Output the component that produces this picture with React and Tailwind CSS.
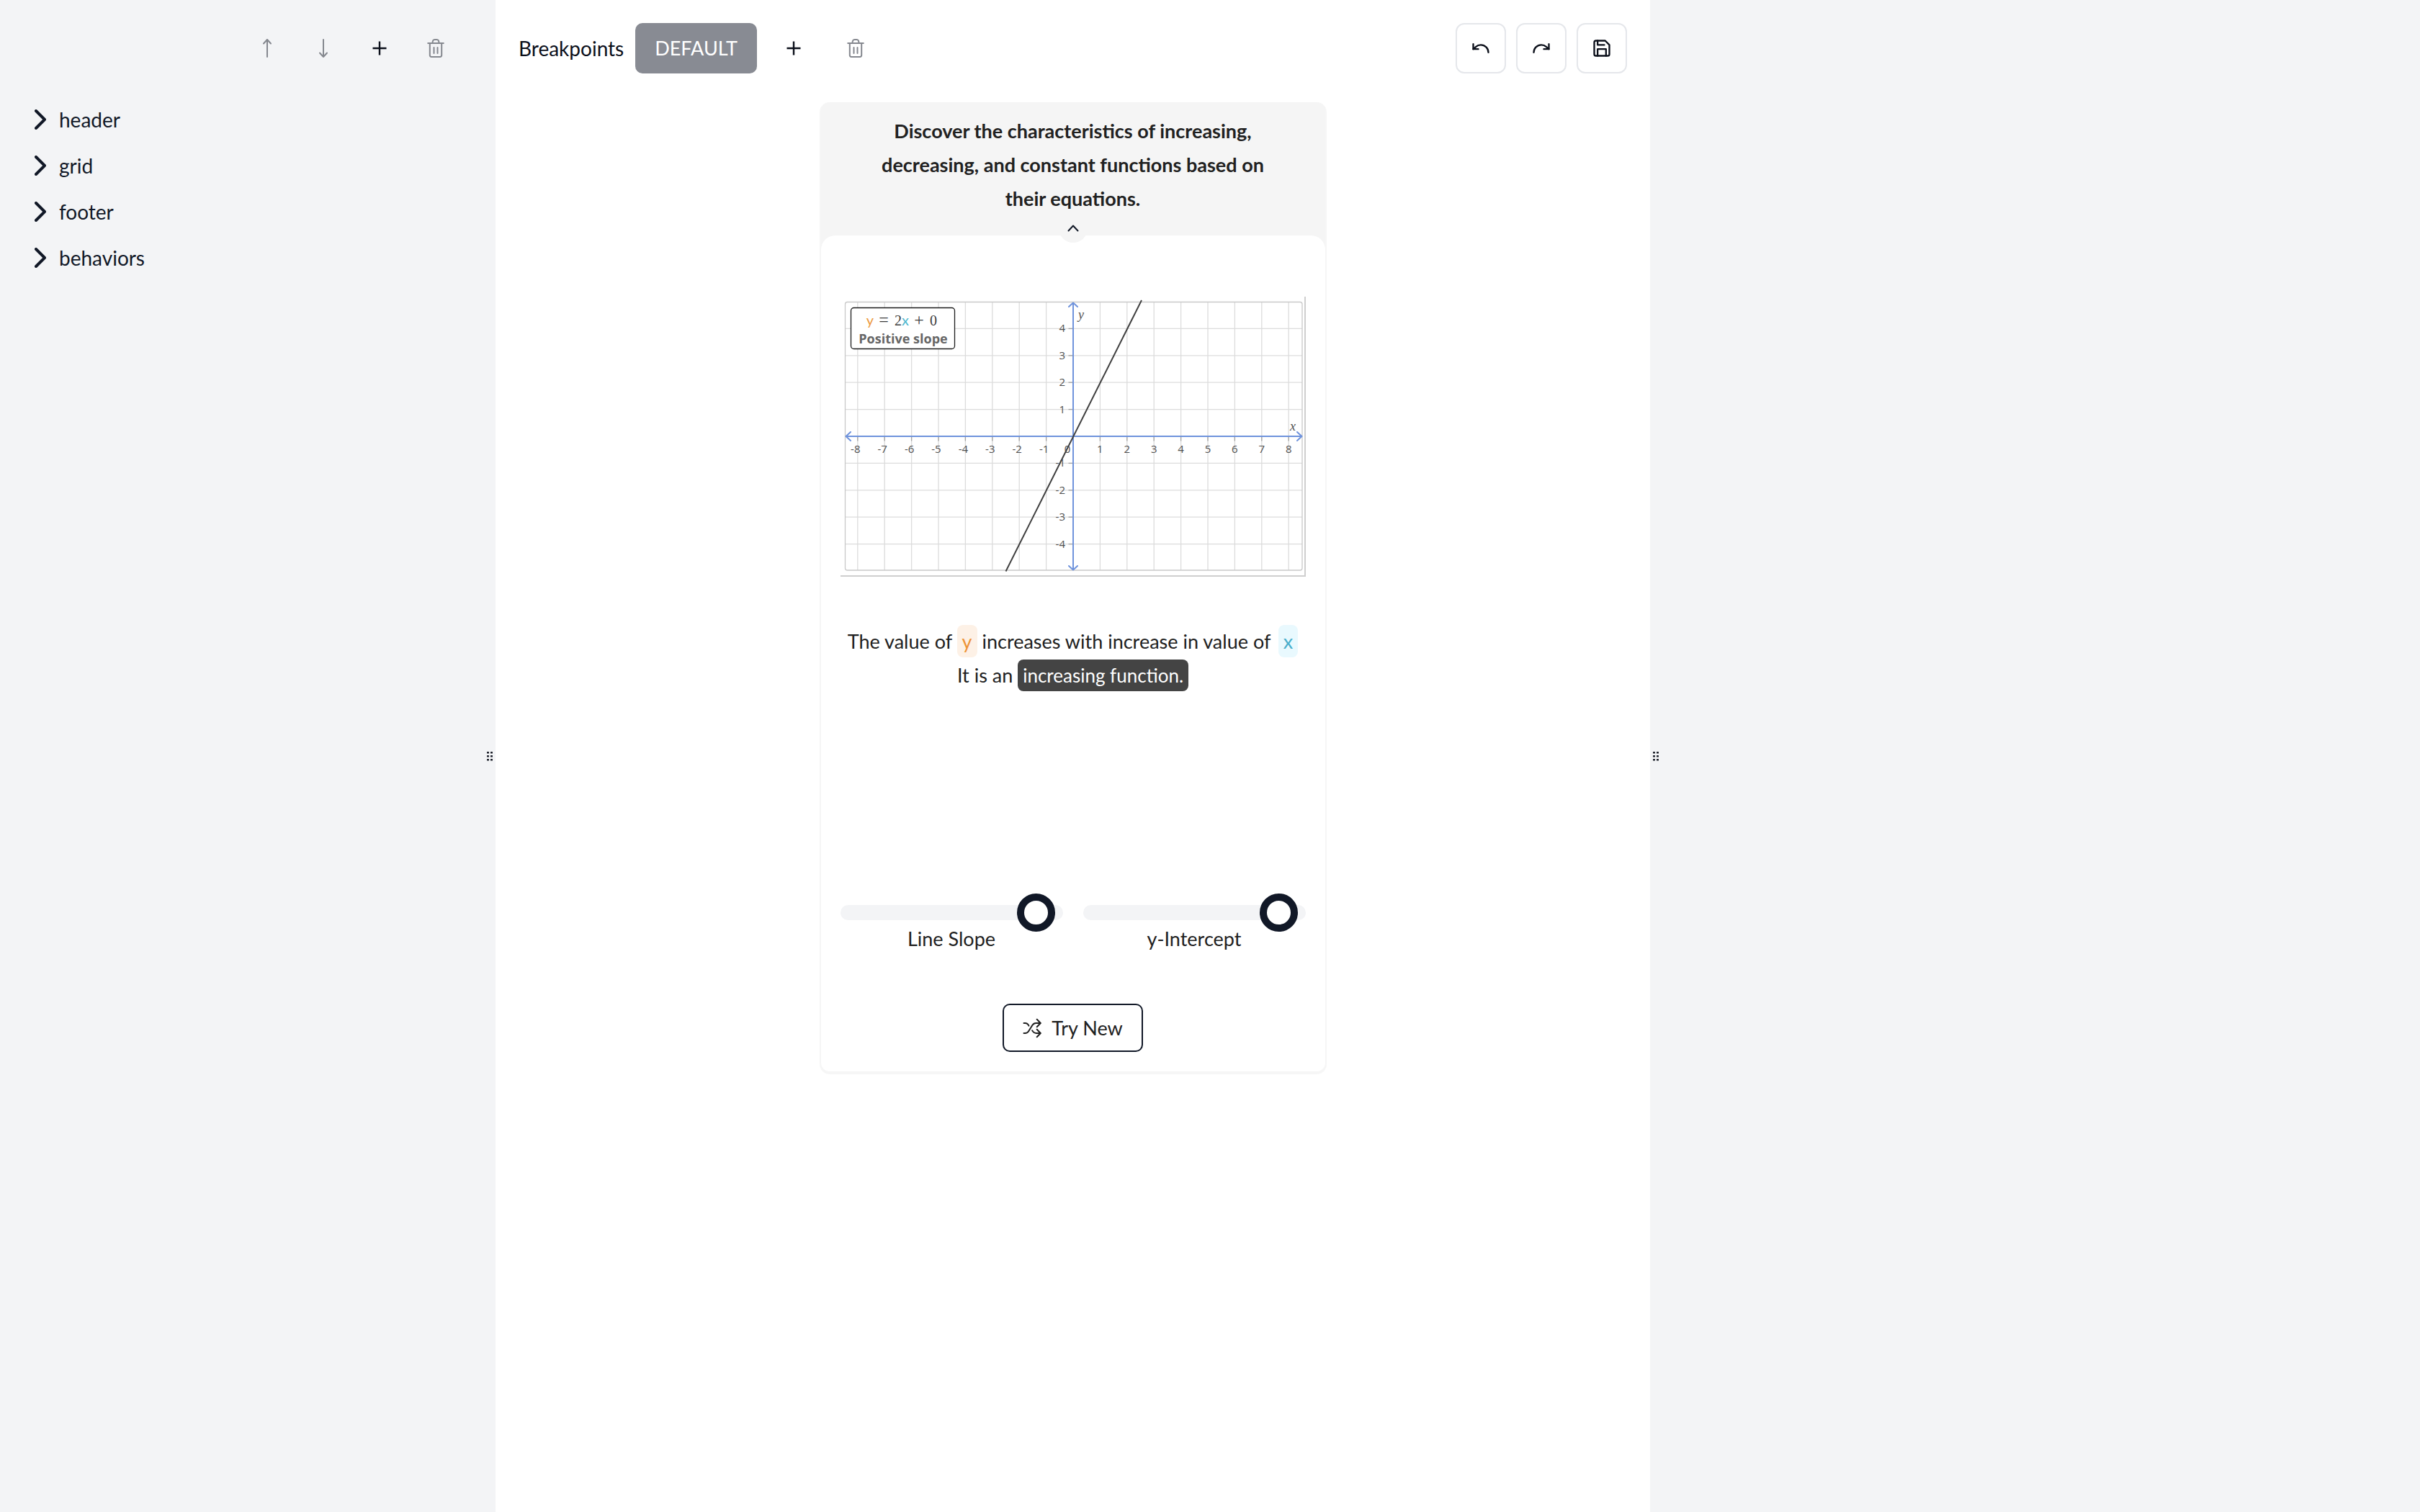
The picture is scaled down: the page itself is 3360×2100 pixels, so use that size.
import React, { useState } from "react";
import { Undo, Redo } from "lucide-react";

const sections = ["header", "grid", "footer", "behaviors"];

function ArrowUpIcon() {
  return (
    <svg viewBox="0 0 28 28" className="size-7" fill="none" stroke="currentColor" strokeWidth="2" strokeLinecap="round" strokeLinejoin="round">
      <path d="M14 26V2M9 7.5 14 2l5 5.5" />
    </svg>
  );
}

function ArrowDownIcon() {
  return (
    <svg viewBox="0 0 28 28" className="size-7" fill="none" stroke="currentColor" strokeWidth="2" strokeLinecap="round" strokeLinejoin="round">
      <path d="M14 2v24M9 20.5 14 26l5-5.5" />
    </svg>
  );
}

function PlusIcon() {
  return (
    <svg viewBox="0 0 28 28" className="size-7" fill="none" stroke="currentColor" strokeWidth="2.4">
      <path d="M14 4.5v19M4.5 14h19" />
    </svg>
  );
}

function TrashIcon() {
  return (
    <svg viewBox="0 0 28 28" className="size-7" fill="none" stroke="currentColor" strokeWidth="2" strokeLinecap="round" strokeLinejoin="round">
      <path d="M3.2 7h21.6M5.8 7v16.5A2.3 2.3 0 0 0 8 26h12a2.3 2.3 0 0 0 2.2-2.5V7M9.5 7c0-3.5 1-5 3-5h3c2 0 3 1.5 3 5M11.5 13v8M16.5 13v8" />
    </svg>
  );
}

function SaveIcon() {
  return (
    <svg viewBox="0 0 24 24" className="size-7" fill="none" stroke="currentColor" strokeWidth="2" strokeLinecap="round" strokeLinejoin="round">
      <path d="M19 21H5a2 2 0 0 1-2-2V5a2 2 0 0 1 2-2h11l5 5v11a2 2 0 0 1-2 2z" />
      <path d="M17 21v-8H7v8M7 3v5h8" />
    </svg>
  );
}

function ShuffleIcon() {
  return (
    <svg viewBox="0 0 26 28" className="h-7 w-[26px]" fill="none" stroke="currentColor" strokeWidth="2" strokeLinecap="round" strokeLinejoin="round">
      <path d="M1.5 21h1.8c2.3 0 3.8-1 5-3l5-8c1.300-2 2.700-3 5-3h6.200" />
      <path d="M1.500 7h2c1.800 0 3.200.8 4.300 2.600l.6 1" />
      <path d="M13.200 17.200l.8 1.300c1.200 1.700 2.600 2.500 4.500 2.500h6" />
      <path d="M19.700 1.700l5 5.300-5 5.300M19.700 15.700l5 5.300-5 5.300" />
    </svg>
  );
}

function Grip() {
  return (
    <svg viewBox="0 0 8 13" className="h-[13px] w-2" fill="#1b1f29">
      {[0, 5, 10].map((y) => (
        <React.Fragment key={y}>
          <rect x="0" y={y} width="3" height="2.5" rx="0.6" />
          <rect x="5" y={y} width="3" height="2.5" rx="0.6" />
        </React.Fragment>
      ))}
    </svg>
  );
}

function IconButton({ label, disabled, children }) {
  return (
    <button type="button" aria-label={label} disabled={disabled} className="flex size-[70px] items-center justify-center text-[#0b0f1a] disabled:text-[#85888f]">
      {children}
    </button>
  );
}

function OutlineButton({ label, children }) {
  return (
    <button type="button" aria-label={label} className="flex size-[70px] items-center justify-center rounded-xl border-2 border-[#e5e7eb] bg-white text-[#0b0f1a]">
      {children}
    </button>
  );
}

const U = 37.4;
const OX = 323;
const OY = 194;
const range = (n) => Array.from({ length: n * 2 + 1 }, (_, i) => i - n);

function Graph() {
  return (
    <svg viewBox="0 0 644 387" className="block w-full" fontFamily="'Open Sans', sans-serif" fontSize="15" fill="#505050">
      <g stroke="#dcdcdc" strokeWidth="1.3">
        {range(8).map((n) => (
          <path key={n} d={`M${OX + n * U} 7V380`} />
        ))}
        {range(4).map((n) => (
          <path key={n} d={`M6 ${OY + n * U}H641`} />
        ))}
      </g>
      <rect x="6.5" y="7.5" width="634.5" height="372.5" rx="3" fill="none" stroke="#c9c9c9" strokeWidth="1.3" />
      <g stroke="#a3a3a3" strokeWidth="1.3">
        {range(8).map((n) => (
          <path key={n} d={`M${OX + n * U} ${OY}v6.5`} />
        ))}
        {range(4).map((n) => (
          <path key={n} d={`M${OX} ${OY + n * U}h-6.5`} />
        ))}
      </g>
      {range(8).filter((n) => n !== 0).map((n) => (
        <text key={n} x={OX + n * U - (n < 0 ? 3 : 0)} y={OY + 23} textAnchor="middle">{n}</text>
      ))}
      {range(4).filter((n) => n !== 0).map((n) => (
        <text key={n} x={OX - 11} y={OY - n * U + 5} textAnchor="end">{n}</text>
      ))}
      <text x={OX - 8} y={OY + 23} textAnchor="middle">0</text>
      <g fontFamily="'Liberation Serif', serif" fontStyle="italic" fontSize="18">
        <text x={OX + 7} y={31}>y</text>
        <text x={624} y={OY - 8}>x</text>
      </g>
      <g stroke="#6f93dc" strokeWidth="2" fill="none" strokeLinecap="round" strokeLinejoin="round">
        <path d={`M8 ${OY}H640M${OX} 9V379`} />
        <path d={`M14 ${OY - 6}L7.5 ${OY}L14 ${OY + 6}M634 ${OY - 6}L640.5 ${OY}L634 ${OY + 6}`} />
        <path d={`M${OX - 6} 14L${OX} 8.5L${OX + 6} 14M${OX - 6} 374L${OX} 379.5L${OX + 6} 374`} />
      </g>
      <path d={`M${OX - 93.5} 381.5L${OX + 95} 5`} stroke="#404040" strokeWidth="2" />
      <rect x="14.5" y="15.5" width="144" height="57" rx="4" fill="#fff" stroke="#1c1c1c" strokeWidth="1.3" />
      <g fontFamily="'Liberation Serif', serif" fontSize="20" fill="#3c3c3c" textAnchor="middle">
        <text x="41" y="40" fontFamily="Lato, sans-serif" fill="#ed9a3f">y</text>
        <text x="60" y="40" fontSize="24">=</text>
        <text x="80" y="40">2</text>
        <text x="90" y="40" fontFamily="Lato, sans-serif" fill="#4fb8cf">x</text>
        <text x="109" y="40" fontSize="24">+</text>
        <text x="129" y="40">0</text>
      </g>
      <text x="87" y="65" textAnchor="middle" fontSize="18" fontWeight="700" fill="#666">Positive slope</text>
    </svg>
  );
}

function Slider({ id, label }) {
  const [value, setValue] = useState(96);
  return (
    <div className="flex flex-1 flex-col items-center gap-3">
      <input
        id={id}
        type="range"
        min="0"
        max="100"
        value={value}
        onChange={(e) => setValue(Number(e.target.value))}
        className="block h-[21px] w-full appearance-none rounded-full bg-[#f3f4f6] [&::-webkit-slider-thumb]:size-[53px] [&::-webkit-slider-thumb]:appearance-none [&::-webkit-slider-thumb]:rounded-full [&::-webkit-slider-thumb]:border-10 [&::-webkit-slider-thumb]:border-[#111827] [&::-webkit-slider-thumb]:bg-white"
      />
      <label htmlFor={id} className="leading-7">{label}</label>
    </div>
  );
}

export default function App() {
  return (
    <div className="flex min-h-screen bg-white font-[Lato,sans-serif] text-[27px] leading-10 text-[#0b0f1a]">
      <aside className="flex min-w-0 shrink grow-[688] basis-0 bg-[#f3f4f6]">
        <div className="flex-1 pt-8">
          <div className="flex justify-end gap-2">
            <IconButton label="Move up" disabled><ArrowUpIcon /></IconButton>
            <IconButton label="Move down" disabled><ArrowDownIcon /></IconButton>
            <IconButton label="Add"><PlusIcon /></IconButton>
            <IconButton label="Delete" disabled><TrashIcon /></IconButton>
          </div>
          <ul className="mt-8 text-[28px] text-[#111827]">
            {sections.map((s) => (
              <li key={s}>
                <button type="button" className="flex h-16 w-full items-center gap-[18px] pl-12">
                  <svg viewBox="0 0 16 28" className="h-7 w-4" fill="none" stroke="currentColor" strokeWidth="4" strokeLinecap="round" strokeLinejoin="round">
                    <path d="M2 2l12 12L2 26" />
                  </svg>
                  {s}
                </button>
              </li>
            ))}
          </ul>
        </div>
        <div className="flex w-12 items-center justify-end pr-1">
          <Grip />
        </div>
      </aside>

      <main className="min-w-0 shrink grow-[1603] basis-0">
        <div className="flex items-center px-8 pt-8">
          <span className="mr-4 text-[28px]">Breakpoints</span>
          <button type="button" className="h-[70px] rounded-[10px] bg-[#888b93] px-[27px] text-white">DEFAULT</button>
          <div className="ml-4 flex gap-4">
            <IconButton label="Add breakpoint"><PlusIcon /></IconButton>
            <IconButton label="Delete breakpoint" disabled><TrashIcon /></IconButton>
          </div>
          <div className="ml-auto flex gap-[14px]">
            <OutlineButton label="Undo"><Undo size={28} /></OutlineButton>
            <OutlineButton label="Redo"><Redo size={28} /></OutlineButton>
            <OutlineButton label="Save"><SaveIcon /></OutlineButton>
          </div>
        </div>

        <section className="mx-auto mt-10 w-full max-w-[700px] rounded-xl bg-[#f5f5f5] text-[#212121] shadow-[0_2px_1px_2px_#f6f6f6]">
          <header className="px-16 pt-4 pb-7 text-center">
            <h1 className="leading-[47px] font-bold">
              Discover the characteristics of increasing,<br />
              decreasing, and constant functions based on<br />
              their equations.
            </h1>
          </header>
          <div className="rounded-t-[20px] rounded-b-xl bg-white px-[27px] pb-[27px]">
            <div className="flex h-[85px] justify-center">
              <button type="button" aria-label="Collapse" className="-mt-[30px] flex size-10 items-center justify-center rounded-full bg-[#f5f5f5]">
                <svg viewBox="0 0 16 10" className="h-[10px] w-4" fill="none" stroke="#111827" strokeWidth="2" strokeLinecap="round" strokeLinejoin="round">
                  <path d="M1.5 8.5 8 1.5l6.5 7" />
                </svg>
              </button>
            </div>
            <div className="border-r-2 border-b-2 border-[#cfcfcf]">
              <Graph />
            </div>
            <p className="mt-[66px] text-center leading-[47px]">
              The value of <span className="rounded-lg bg-[#fdf1e6] px-[7px] py-[6px] text-[#ee9437]">y</span> increases with increase in value of{" "}
              <span className="ml-1 rounded-lg bg-[#e9f9fe] px-[7px] py-[6px] text-[#4aaecb]">x</span>
              <br />
              It is an <span className="rounded-lg bg-[#444] px-[7px] py-[6px] text-[26px] text-white">increasing function.</span>
            </p>
            <div className="mt-[295px] flex gap-7">
              <Slider id="slope" label="Line Slope" />
              <Slider id="intercept" label="y-Intercept" />
            </div>
            <div className="mt-[76px] flex justify-center">
              <button type="button" className="flex h-[67px] items-center gap-[14px] rounded-[10px] border-2 border-[#111827] px-[26px]">
                <ShuffleIcon />
                Try New
              </button>
            </div>
          </div>
        </section>
      </main>

      <aside className="flex min-w-0 shrink grow-[1069] basis-0 bg-[#f3f4f6]">
        <div className="flex w-12 items-center pl-1">
          <Grip />
        </div>
      </aside>
    </div>
  );
}
